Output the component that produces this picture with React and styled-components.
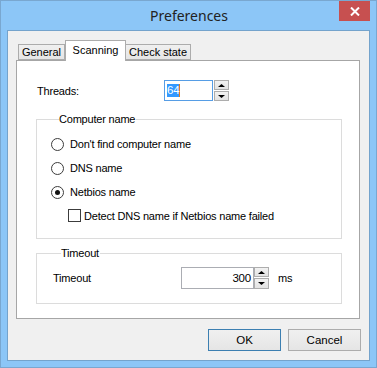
import React from "react";
import styled, { createGlobalStyle } from "styled-components";

const Global = createGlobalStyle`
  html, body { margin: 0; padding: 0; background: #8cc6f7; }
  * { box-sizing: border-box; }
`;

const Win = styled.div`
  width: 377px;
  height: 368px;
  background: #8cc6f7;
  border: 1px solid #79a7d0;
  display: flex;
  flex-direction: column;
  font-family: "Liberation Sans", Arial, sans-serif;
  font-size: 11px;
  letter-spacing: -0.2px;
  color: #000;
`;

const TitleBar = styled.div`
  height: 29px;
  display: grid;
  grid-template-columns: 1fr auto 1fr;
  align-items: start;
`;

const Title = styled.div`
  grid-column: 2;
  font-family: "Noto Sans", "Open Sans", sans-serif;
  font-size: 14px;
  letter-spacing: 0;
  line-height: 29px;
  color: #222;
  padding-left: 1px;
`;

const CloseBtn = styled.div`
  grid-column: 3;
  justify-self: end;
  width: 31px;
  height: 20px;
  margin-right: 6px;
  background: #c75050;
  display: flex;
  align-items: center;
  justify-content: center;
`;

const Client = styled.div`
  flex: 1;
  margin: 0 6px 6px 6px;
  border: 1px solid #74a3cc;
  background: #f0f0f0;
  display: flex;
  flex-direction: column;
  padding: 8px 9px 0 8px;
`;

const TabStrip = styled.div`
  display: flex;
  align-items: flex-end;
  padding-left: 2px;
  height: 21px;
  position: relative;
  z-index: 1;
`;

const Tab = styled.div`
  width: ${(p) => p.$w}px;
  height: ${(p) => (p.$active ? "21px" : "16px")};
  padding-top: ${(p) => (p.$active ? "2px" : "0")};
  margin-bottom: ${(p) => (p.$active ? "-1px" : "0")};
  border: 1px solid #acacac;
  border-bottom: ${(p) => (p.$active ? "none" : "1px solid #acacac")};
  border-left: ${(p) => (p.$noLeft ? "none" : "1px solid #acacac")};
  background: ${(p) => (p.$active ? "#fff" : "linear-gradient(#f0f0f0, #e5e5e5)")};
  font-size: 11px;
  letter-spacing: 0;
  line-height: 14px;
  text-align: center;
  white-space: nowrap;
`;

const Panel = styled.div`
  height: 259px;
  background: #fff;
  border: 1px solid #a6a6a6;
  display: flex;
  flex-direction: column;
  padding: 19px 17px 0 19px;
`;

const Row = styled.div`
  display: flex;
  align-items: center;
  height: ${(p) => p.$h || 21}px;
  padding-left: ${(p) => p.$indent || 0}px;
`;

const Label = styled.span`
  width: ${(p) => p.$w}px;
  margin-left: ${(p) => p.$ml || 0}px;
  flex: none;
  white-space: nowrap;
`;

const Input = styled.div`
  width: ${(p) => p.$w}px;
  height: ${(p) => p.$h || 21}px;
  border: 1px solid ${(p) => (p.$focus ? "#569de5" : "#abadb3")};
  background: #fff;
  display: flex;
  align-items: center;
  justify-content: ${(p) => (p.$right ? "flex-end" : "flex-start")};
  padding: 0 2px;
  font-size: 11.5px;
`;

const Sel = styled.span`
  background: #3399ff;
  color: #fff;
  line-height: 13px;
  border-right: 1px solid #e07b20;
`;

const Spin = styled.div`
  display: flex;
  flex-direction: column;
  gap: ${(p) => p.$gap}px;
  margin-left: ${(p) => p.$ml}px;
`;

const SpinBtn = styled.div`
  width: ${(p) => p.$w}px;
  height: ${(p) => p.$h}px;
  border: 1px solid #adadad;
  background: linear-gradient(#f2f2f2, #e3e3e3);
  display: flex;
  align-items: center;
  justify-content: center;
`;

const Group = styled.fieldset`
  margin: 0;
  padding: ${(p) => p.$pad};
  border: 1px solid #dcdcdc;
  display: flex;
  flex-direction: column;
  min-width: 0;
  width: 306px;
`;

const Legend = styled.legend`
  padding: 0 1px 0 0;
  margin-left: 8px;
  line-height: 13px;
`;

const Radio = styled.span`
  width: 13px;
  height: 13px;
  border-radius: 50%;
  border: 1px solid #3c3c3c;
  background: #fff;
  display: flex;
  align-items: center;
  justify-content: center;
  margin-right: 6px;
  flex: none;
`;

const Dot = styled.span`
  width: 5px;
  height: 5px;
  border-radius: 50%;
  background: #111;
`;

const Check = styled.span`
  width: 13px;
  height: 13px;
  border: 1px solid #3c3c3c;
  background: #fff;
  margin-right: 3px;
  flex: none;
`;

const Footer = styled.div`
  display: flex;
  justify-content: flex-end;
  gap: 7px;
  padding-top: 10px;
  margin-right: -1px;
`;

const Button = styled.div`
  width: 73px;
  height: 22px;
  border: 1px solid ${(p) => (p.$default ? "#3c7fb1" : "#acacac")};
  background: linear-gradient(#f0f0f0, #e5e5e5);
  display: flex;
  align-items: center;
  justify-content: center;
  font-size: 11.5px;
  letter-spacing: 0;
`;

const Spacer = styled.div`
  height: ${(p) => p.$h}px;
  flex: none;
`;

const Up = ({ s = 4 }) => (
  <svg width={2 * s + 1} height={s} viewBox={`0 0 ${2 * s + 1} ${s}`}>
    <polygon points={`0,${s} ${s + 0.5},0 ${2 * s + 1},${s}`} fill="#000" />
  </svg>
);
const Down = ({ s = 4 }) => (
  <svg width={2 * s + 1} height={s} viewBox={`0 0 ${2 * s + 1} ${s}`}>
    <polygon points={`0,0 ${s + 0.5},${s} ${2 * s + 1},0`} fill="#000" />
  </svg>
);

export default function App() {
  return (
    <>
      <Global />
      <Win>
        <TitleBar>
          <Title>Preferences</Title>
          <CloseBtn>
            <svg width="10" height="9" viewBox="0 0 10 9">
              <path d="M1 0.5 L9 8.5 M9 0.5 L1 8.5" stroke="#fff" strokeWidth="2" />
            </svg>
          </CloseBtn>
        </TitleBar>
        <Client>
          <TabStrip>
            <Tab $w={47}>General</Tab>
            <Tab $w={61} $active>Scanning</Tab>
            <Tab $w={65} $noLeft>Check state</Tab>
          </TabStrip>
          <Panel>
            <Row $indent={1}>
              <Label $w={127}>Threads:</Label>
              <Input $w={49} $focus>
                <Sel>64</Sel>
              </Input>
              <Spin $gap={1} $ml={1}>
                <SpinBtn $w={15} $h={10}><Up s={3} /></SpinBtn>
                <SpinBtn $w={15} $h={10}><Down s={3} /></SpinBtn>
              </Spin>
            </Row>
            <Spacer $h={12} />
            <Group $pad="6px 0 11px 14px">
              <Legend>Computer name</Legend>
              <Row $h={24}>
                <Radio />
                <span>Don't find computer name</span>
              </Row>
              <Row $h={24}>
                <Radio />
                <span>DNS name</span>
              </Row>
              <Row $h={24}>
                <Radio><Dot /></Radio>
                <span>Netbios name</span>
              </Row>
              <Row $h={23} $indent={17}>
                <Check />
                <span>Detect DNS name if Netbios name failed</span>
              </Row>
            </Group>
            <Spacer $h={8} />
            <Group $pad="7px 0 14px 16px">
              <Legend>Timeout</Legend>
              <Row $h={22}>
                <Label $w={128}>Timeout</Label>
                <Input $w={73} $h={22} $right>300</Input>
                <Spin $gap={1} $ml={0}>
                  <SpinBtn $w={15} $h={10}><Up s={3} /></SpinBtn>
                  <SpinBtn $w={15} $h={11}><Down s={3} /></SpinBtn>
                </Spin>
                <Label $w={40} $ml={9}>ms</Label>
              </Row>
            </Group>
          </Panel>
          <Footer>
            <Button $default>OK</Button>
            <Button>Cancel</Button>
          </Footer>
        </Client>
      </Win>
    </>
  );
}
